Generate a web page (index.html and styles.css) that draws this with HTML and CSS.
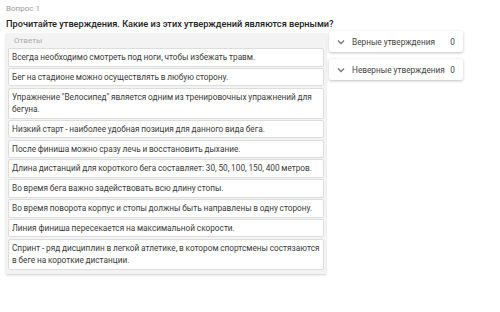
FILE: index.html
```html
<!DOCTYPE html>
<html lang="ru">
<head>
  <meta charset="UTF-8" />
  <title>Вопрос 1</title>
  <link rel="stylesheet" href="styles.css">
</head>
<body>
  <div class="question-num">Вопрос 1</div>
  <div class="question-text">Прочитайте утверждения. Какие из этих утверждений являются верными?</div>

  <div class="board">
    <!-- Answers list -->
    <div class="answers">
      <div class="answers-title">Ответы</div>
      <div class="item">Всегда необходимо смотреть под ноги, чтобы избежать травм.</div>
      <div class="item">Бег на стадионе можно осуществлять в любую сторону.</div>
      <div class="item">Упражнение "Велосипед" является одним из тренировочных упражнений для бегуна.</div>
      <div class="item">Низкий старт - наиболее удобная позиция для данного вида бега.</div>
      <div class="item">После финиша можно сразу лечь и восстановить дыхание.</div>
      <div class="item">Длина дистанций для короткого бега составляет: 30, 50, 100, 150, 400 метров.</div>
      <div class="item">Во время бега важно задействовать всю длину стопы.</div>
      <div class="item">Во время поворота корпус и стопы должны быть направлены в одну сторону.</div>
      <div class="item">Линия финиша пересекается на максимальной скорости.</div>
      <div class="item">Спринт - ряд дисциплин в легкой атлетике, в котором спортсмены состязаются в беге на короткие дистанции.</div>
    </div>

    <!-- Target groups -->
    <div class="groups">
      <div class="group">
        <svg class="chevron" width="8" height="6" viewBox="0 0 8 6"><path d="M1 1.5 L4 4.5 L7 1.5" fill="none" stroke="#777" stroke-width="1.3"/></svg>
        <span class="group-name">Верные утверждения</span>
        <span class="group-count">0</span>
      </div>
      <div class="group">
        <svg class="chevron" width="8" height="6" viewBox="0 0 8 6"><path d="M1 1.5 L4 4.5 L7 1.5" fill="none" stroke="#777" stroke-width="1.3"/></svg>
        <span class="group-name">Неверные утверждения</span>
        <span class="group-count">0</span>
      </div>
    </div>
  </div>
</body>
</html>
```

FILE: styles.css
```css
body {
  font-family: Roboto, "Noto Sans", sans-serif;
  margin: 0;
  padding: 3px 6px;
  background: #ffffff;
  color: #3a3a3a;
  font-size: 8.25px;
}

.question-num {
  color: #999;
  font-size: 8px;
  line-height: 12px;
}

.question-text {
  color: #222;
  font-size: 9.2px;
  font-weight: 500;
  line-height: 12px;
  margin-top: 3px;
}

.board {
  display: flex;
  align-items: flex-start;
  gap: 3px;
  margin-top: 3px;
}

.answers {
  width: 316px;
  background: #f3f3f3;
  padding: 1px 2px 3px;
  box-shadow: 0 1px 2px rgba(0,0,0,0.2);
}

.answers-title {
  color: #aaa;
  font-size: 8px;
  line-height: 11px;
  padding: 1px 6px 2px;
}

.item {
  background: #fff;
  border: 1px solid #ddd;
  border-radius: 2px;
  padding: 2px 1px 2px 3px;
  line-height: 12.5px;
  word-spacing: -0.3px;
  margin-bottom: 1.3px;
}

.groups {
  display: flex;
  flex-direction: column;
  gap: 7px;
  margin-top: -2px;
}

.group {
  width: 134px;
  height: 21px;
  display: flex;
  align-items: center;
  background: #fff;
  box-shadow: 0 1px 3px rgba(0,0,0,0.25);
  border-radius: 2px;
  padding: 0 8px 0 8px;
  box-sizing: border-box;
  color: #444;
}

.chevron {
  flex-shrink: 0;
  margin-right: 7px;
}

.group-name {
  flex: 1;
  white-space: nowrap;
}

.group-count {
  margin-left: 3px;
}
```
